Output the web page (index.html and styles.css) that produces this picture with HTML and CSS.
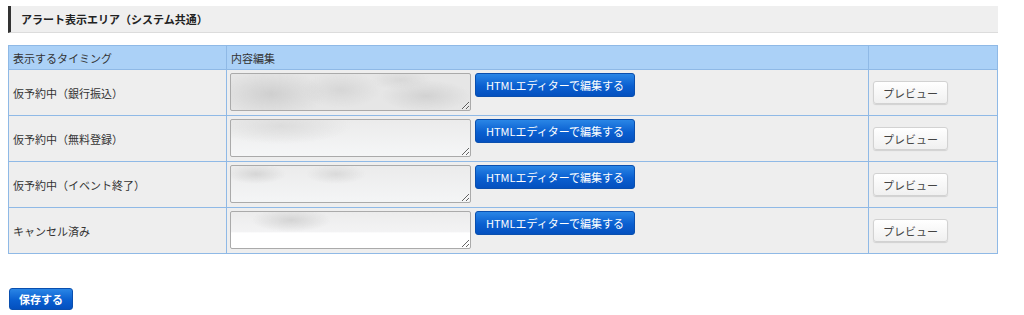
FILE: index.html
```html
<!DOCTYPE html>
<html lang="ja">
<head>
  <meta charset="UTF-8" />
  <title>アラート表示エリア</title>
  <link rel="stylesheet" href="styles.css">
</head>
<body>
  <div class="wrap">
    <h3 class="section-title">アラート表示エリア（システム共通）</h3>

    <table class="alert-table">
      <tr>
        <th class="col-timing">表示するタイミング</th>
        <th class="col-edit">内容編集</th>
        <th class="col-preview"></th>
      </tr>
      <tr>
        <td class="timing">仮予約中（銀行振込）</td>
        <td class="edit">
          <div class="edit-box">
            <textarea class="alert-text blur1"></textarea>
            <button class="btn-blue">HTMLエディターで編集する</button>
          </div>
        </td>
        <td class="preview"><button class="btn-gray">プレビュー</button></td>
      </tr>
      <tr>
        <td class="timing">仮予約中（無料登録）</td>
        <td class="edit">
          <div class="edit-box">
            <textarea class="alert-text blur2"></textarea>
            <button class="btn-blue">HTMLエディターで編集する</button>
          </div>
        </td>
        <td class="preview"><button class="btn-gray">プレビュー</button></td>
      </tr>
      <tr>
        <td class="timing">仮予約中（イベント終了）</td>
        <td class="edit">
          <div class="edit-box">
            <textarea class="alert-text blur3"></textarea>
            <button class="btn-blue">HTMLエディターで編集する</button>
          </div>
        </td>
        <td class="preview"><button class="btn-gray">プレビュー</button></td>
      </tr>
      <tr>
        <td class="timing">キャンセル済み</td>
        <td class="edit">
          <div class="edit-box">
            <textarea class="alert-text blur4"></textarea>
            <button class="btn-blue">HTMLエディターで編集する</button>
          </div>
        </td>
        <td class="preview"><button class="btn-gray">プレビュー</button></td>
      </tr>
    </table>

    <div class="actions">
      <button class="btn-blue btn-save">保存する</button>
    </div>
  </div>
</body>
</html>
```

FILE: styles.css
```css
body {
  margin: 0;
  font-family: "Noto Sans CJK JP", "Noto Sans", sans-serif;
  font-size: 11px;
  color: #333;
  background: #fff;
}
.wrap {
  width: 990px;
  padding: 6px 0 0 8px;
}

/* 見出し */
.section-title {
  margin: 0;
  height: 26px;
  line-height: 26px;
  padding-left: 10px;
  font-size: 11px;
  font-weight: bold;
  color: #222;
  background: #efefef;
  border-left: 3px solid #333;
  border-bottom: 1px solid #dcdcdc;
}

/* テーブル */
.alert-table {
  margin-top: 12px;
  width: 990px;
  border-collapse: collapse;
  table-layout: fixed;
}
.alert-table th,
.alert-table td {
  border: 1px solid #8fb9e6;
  padding: 0 4px;
  text-align: left;
  font-weight: normal;
  line-height: 16px;
}
.alert-table th {
  background: #abd1f7;
  height: 23px;
  color: #333;
}
.col-timing { width: 209px; }
.col-edit { width: 633px; }
.alert-table td {
  background: #eeeeee;
  height: 46px;
  box-sizing: border-box;
}
.alert-table td.edit {
  vertical-align: top;
  padding: 3px 3px 0;
}
.edit-box {
  display: flex;
  align-items: flex-start;
  gap: 4px;
  height: 39px;
}
.alert-text {
  display: block;
  width: 241px;
  height: 38px;
  margin: 0;
  box-sizing: border-box;
  border: 1px solid #aaa;
  border-radius: 2px;
  background-color: #fff;
}
.blur1 {
  background:
    radial-gradient(ellipse 55px 24px at 40px 20px, #cfcfcf, rgba(215,215,215,0)),
    radial-gradient(ellipse 40px 18px at 110px 16px, #d6d6d6, rgba(215,215,215,0)),
    radial-gradient(ellipse 45px 16px at 195px 22px, #d2d2d2, rgba(215,215,215,0)),
    radial-gradient(ellipse 30px 10px at 170px 6px, #d8d8d8, rgba(215,215,215,0)),
    #e6e6e6;
}
.blur2 {
  background:
    radial-gradient(ellipse 70px 18px at 50px 6px, #dcdcdc, rgba(230,230,230,0)),
    linear-gradient(#ebebeb, #f5f6f7);
}
.blur3 {
  background:
    radial-gradient(ellipse 30px 10px at 25px 8px, #d6d6d6, rgba(230,230,230,0)),
    radial-gradient(ellipse 30px 10px at 105px 8px, #dadada, rgba(230,230,230,0)),
    linear-gradient(#ebebeb, #f4f5f6);
}
.blur4 {
  background:
    radial-gradient(ellipse 40px 12px at 60px 8px, #d4d4d4, rgba(230,230,230,0)),
    linear-gradient(#ececec 0, #f3f3f4 55%, #fff 58%);
}

.alert-table td.preview {
  vertical-align: middle;
}

/* ボタン */
.btn-blue {
  font-family: inherit;
  font-size: 11px;
  color: #fff;
  height: 24px;
  padding: 0 10px;
  border: 1px solid #0a4fae;
  border-radius: 3px;
  background: linear-gradient(#2a86e6, #0a5fd0 55%, #0450bf);
  cursor: pointer;
  white-space: nowrap;
}
.edit .btn-blue {
  width: 160px;
}
.btn-gray {
  font-family: inherit;
  font-size: 11px;
  color: #444;
  width: 75px;
  height: 23px;
  border: 1px solid #d2d2d2;
  border-radius: 3px;
  background: linear-gradient(#ffffff, #f0f0f0);
  box-shadow: 0 1px 1px rgba(0,0,0,0.12);
  cursor: pointer;
}

.actions {
  margin-top: 34px;
}
.btn-save {
  width: 64px;
  height: 22px;
  padding: 0;
  font-weight: bold;
  margin-left: 1px;
}
```
